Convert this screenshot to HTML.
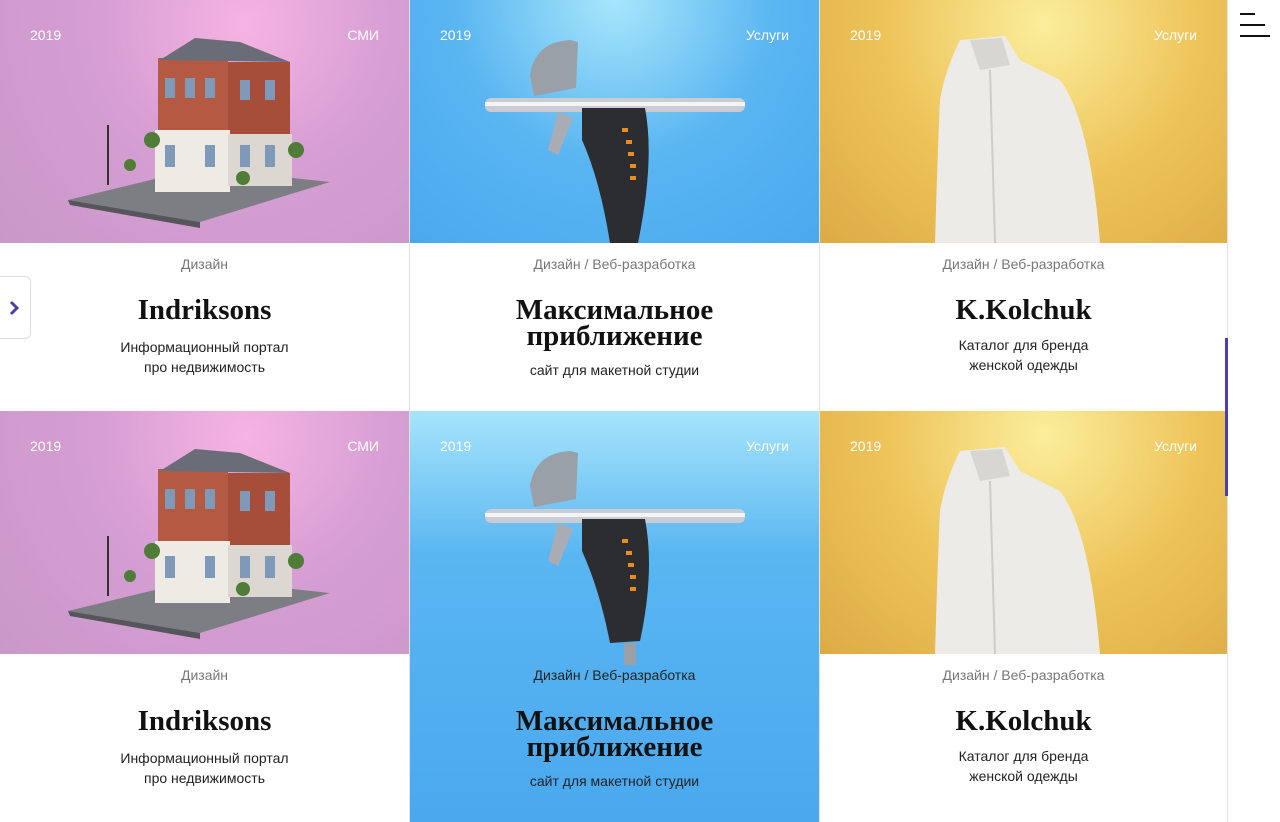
<!DOCTYPE html>
<html><head><meta charset="utf-8"><style>
*{margin:0;padding:0;box-sizing:border-box}
body{width:1280px;height:822px;overflow:hidden;background:#fff;font-family:"Liberation Sans","DejaVu Sans",sans-serif;position:relative}
.card{position:absolute;width:410px;height:411px;border-right:1px solid #e2e2e2}
.img{position:absolute;left:0;top:0;width:100%;height:243px;overflow:hidden}
.yr{position:absolute;left:30px;top:27px;color:#fff;font-size:14px}
.tag{position:absolute;right:30px;top:27px;color:#fff;font-size:14px}
.cat{position:absolute;top:256px;width:100%;text-align:center;color:#777;font-size:14px}
.t{position:absolute;top:297px;width:100%;text-align:center;font-family:"Liberation Serif",serif;font-weight:bold;font-size:29px;line-height:26px;color:#111}
.d{position:absolute;width:100%;text-align:center;font-size:14px;line-height:20px;color:#222}
.pink{background:radial-gradient(circle at 60% 10%,#f6b4e2,#d69ed4 45%,#c998c8)}
.blue{background:radial-gradient(circle at 50% 0%,#a8e6fb,#5ab6f1 50%,#4aa8ef)}
.gold{background:radial-gradient(circle at 55% 10%,#fbee9c,#eec45a 50%,#dcab45)}
</style></head><body>

<!-- row 1 -->
<div class="card" style="left:0;top:0">
 <div class="img pink">
  <svg width="410" height="243" style="position:absolute;left:0;top:0">
   <polygon points="68,200 200,168 330,182 200,222" fill="#7d7d84"/>
   <polygon points="68,200 200,222 200,228 70,205" fill="#55555b"/>
   <rect x="158" y="58" width="70" height="80" fill="#b55a42"/>
   <rect x="228" y="62" width="62" height="76" fill="#a64e3a"/>
   <rect x="155" y="130" width="75" height="62" fill="#eeeae4"/>
   <rect x="228" y="134" width="64" height="52" fill="#dcd7d0"/>
   <polygon points="160,60 195,38 240,42 290,62" fill="#6a6c78"/>
   <g fill="#7f9ab8"><rect x="165" y="78" width="10" height="20"/><rect x="185" y="78" width="10" height="20"/><rect x="205" y="78" width="10" height="20"/><rect x="240" y="80" width="10" height="20"/><rect x="265" y="80" width="10" height="20"/><rect x="165" y="145" width="10" height="22"/><rect x="205" y="145" width="10" height="22"/><rect x="240" y="145" width="10" height="22"/><rect x="265" y="145" width="10" height="22"/></g>
   <g fill="#4f7c36"><circle cx="152" cy="140" r="8"/><circle cx="296" cy="150" r="8"/><circle cx="130" cy="165" r="6"/><circle cx="243" cy="178" r="7"/></g>
   <rect x="107" y="125" width="2" height="60" fill="#333"/>
  </svg>
  <span class="yr">2019</span><span class="tag">СМИ</span>
 </div>
 <div class="cat">Дизайн</div>
 <div class="t">Indriksons</div>
 <div class="d" style="top:337px">Информационный портал<br>про недвижимость</div>
</div>

<div class="card" style="left:410px;top:0">
 <div class="img blue">
  <svg width="410" height="243" style="position:absolute;left:0;top:0">
   <rect x="75" y="98" width="260" height="14" rx="6" fill="#c9ccd2"/>
   <rect x="75" y="102" width="260" height="4" fill="#f3f4f6"/>
   <path d="M120,75 Q125,42 160,40 L168,42 L166,88 L124,96 Z" fill="#9aa0a8"/>
   <path d="M148,112 L163,118 L148,155 L138,150 Z" fill="#a9adb3"/>
   <path d="M172,108 L235,108 Q245,160 228,243 L200,243 Q190,180 172,140 Z" fill="#2c2d30"/>
   <g fill="#f08a1c"><rect x="212" y="128" width="6" height="4"/><rect x="216" y="140" width="6" height="4"/><rect x="218" y="152" width="6" height="4"/><rect x="220" y="164" width="6" height="4"/><rect x="220" y="176" width="6" height="4"/></g>
  </svg>
  <span class="yr">2019</span><span class="tag">Услуги</span>
 </div>
 <div class="cat">Дизайн / Веб-разработка</div>
 <div class="t">Максимальное<br>приближение</div>
 <div class="d" style="top:360px">сайт для макетной студии</div>
</div>

<div class="card" style="left:820px;top:0;width:408px">
 <div class="img gold">
  <svg width="408" height="243" style="position:absolute;left:0;top:0">
   <path d="M140,40 L185,36 L200,60 L240,80 Q270,120 280,243 L115,243 Q118,140 120,100 Q125,70 140,40 Z" fill="#ecebe8"/>
   <path d="M150,40 L182,38 L190,65 L160,70 Z" fill="#d8d6d1"/>
   <path d="M170,70 L175,243" stroke="#cfcdc8" stroke-width="2"/>
  </svg>
  <span class="yr">2019</span><span class="tag">Услуги</span>
 </div>
 <div class="cat">Дизайн / Веб-разработка</div>
 <div class="t">K.Kolchuk</div>
 <div class="d" style="top:335px">Каталог для бренда<br>женской одежды</div>
</div>

<!-- row 2 -->
<div class="card" style="left:0;top:411px">
 <div class="img pink">
  <svg width="410" height="243" style="position:absolute;left:0;top:0">
   <polygon points="68,200 200,168 330,182 200,222" fill="#7d7d84"/>
   <polygon points="68,200 200,222 200,228 70,205" fill="#55555b"/>
   <rect x="158" y="58" width="70" height="80" fill="#b55a42"/>
   <rect x="228" y="62" width="62" height="76" fill="#a64e3a"/>
   <rect x="155" y="130" width="75" height="62" fill="#eeeae4"/>
   <rect x="228" y="134" width="64" height="52" fill="#dcd7d0"/>
   <polygon points="160,60 195,38 240,42 290,62" fill="#6a6c78"/>
   <g fill="#7f9ab8"><rect x="165" y="78" width="10" height="20"/><rect x="185" y="78" width="10" height="20"/><rect x="205" y="78" width="10" height="20"/><rect x="240" y="80" width="10" height="20"/><rect x="265" y="80" width="10" height="20"/><rect x="165" y="145" width="10" height="22"/><rect x="205" y="145" width="10" height="22"/><rect x="240" y="145" width="10" height="22"/><rect x="265" y="145" width="10" height="22"/></g>
   <g fill="#4f7c36"><circle cx="152" cy="140" r="8"/><circle cx="296" cy="150" r="8"/><circle cx="130" cy="165" r="6"/><circle cx="243" cy="178" r="7"/></g>
   <rect x="107" y="125" width="2" height="60" fill="#333"/>
  </svg>
  <span class="yr">2019</span><span class="tag">СМИ</span>
 </div>
 <div class="cat">Дизайн</div>
 <div class="t">Indriksons</div>
 <div class="d" style="top:337px">Информационный портал<br>про недвижимость</div>
</div>

<div class="card" style="left:410px;top:411px;background:linear-gradient(180deg,#a6e4fb 0%,#5ab6f1 35%,#4aa8ef 100%)">
 <svg width="410" height="260" style="position:absolute;left:0;top:0">
   <rect x="75" y="98" width="260" height="14" rx="6" fill="#c9ccd2"/>
   <rect x="75" y="102" width="260" height="4" fill="#f3f4f6"/>
   <path d="M120,75 Q125,42 160,40 L168,42 L166,88 L124,96 Z" fill="#9aa0a8"/>
   <path d="M148,112 L163,118 L148,155 L138,150 Z" fill="#a9adb3"/>
   <path d="M172,108 L235,108 Q245,160 230,230 L200,232 Q190,180 172,140 Z" fill="#2c2d30"/>
   <rect x="214" y="232" width="12" height="22" fill="#9aa0a8"/>
   <g fill="#f08a1c"><rect x="212" y="128" width="6" height="4"/><rect x="216" y="140" width="6" height="4"/><rect x="218" y="152" width="6" height="4"/><rect x="220" y="164" width="6" height="4"/><rect x="220" y="176" width="6" height="4"/></g>
 </svg>
 <span class="yr">2019</span><span class="tag">Услуги</span>
 <div class="cat" style="color:#222">Дизайн / Веб-разработка</div>
 <div class="t">Максимальное<br>приближение</div>
 <div class="d" style="top:360px">сайт для макетной студии</div>
</div>

<div class="card" style="left:820px;top:411px;width:408px">
 <div class="img gold">
  <svg width="408" height="243" style="position:absolute;left:0;top:0">
   <path d="M140,40 L185,36 L200,60 L240,80 Q270,120 280,243 L115,243 Q118,140 120,100 Q125,70 140,40 Z" fill="#ecebe8"/>
   <path d="M150,40 L182,38 L190,65 L160,70 Z" fill="#d8d6d1"/>
   <path d="M170,70 L175,243" stroke="#cfcdc8" stroke-width="2"/>
  </svg>
  <span class="yr">2019</span><span class="tag">Услуги</span>
 </div>
 <div class="cat">Дизайн / Веб-разработка</div>
 <div class="t">K.Kolchuk</div>
 <div class="d" style="top:335px">Каталог для бренда<br>женской одежды</div>
</div>

<!-- side -->
<div style="position:absolute;left:0;top:276px;width:31px;height:63px;background:#fff;border:1px solid #ddd;border-left:none;border-radius:0 6px 6px 0">
 <svg width="30" height="62" style="position:absolute;left:0;top:0"><path d="M11,25 L17,31 L11,37" fill="none" stroke="#4b3fb0" stroke-width="3"/></svg>
</div>
<div style="position:absolute;left:1240px;top:13px;width:15px;height:2px;background:#111"></div>
<div style="position:absolute;left:1240px;top:24px;width:25px;height:2px;background:#111"></div>
<div style="position:absolute;left:1240px;top:35px;width:30px;height:2px;background:#111"></div>
<div style="position:absolute;left:1225px;top:338px;width:3px;height:158px;background:#4b3fb0"></div>
</body></html>
